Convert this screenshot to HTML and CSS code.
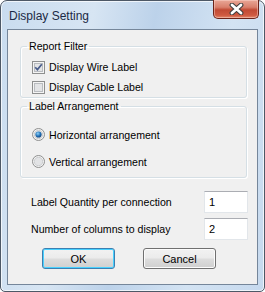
FILE: index.html
```html
<!DOCTYPE html>
<html lang="en">
<head>
    <meta charset="UTF-8">
    <title>Display Setting</title>
    <link rel="stylesheet" href="styles.css">
</head>
<body>
    <div class="window">
        <div class="titlebar">
            <span class="title">Display Setting</span>
            <button class="close-btn" type="button">
                <svg width="19" height="12" viewBox="0 0 19 12">
                    <path d="M5 2 L14 10 M14 2 L5 10" stroke="#3d3d3d" stroke-width="4.8" stroke-linecap="round"/>
                    <path d="M5 2 L14 10 M14 2 L5 10" stroke="#ffffff" stroke-width="2.8" stroke-linecap="round"/>
                </svg>
            </button>
        </div>
        <div class="client">
            <fieldset class="group filter">
                <legend>Report Filter</legend>
                <label class="check-row">
                    <svg class="box" width="13" height="13" viewBox="0 0 13 13">
                        <rect x="0.5" y="0.5" width="12" height="12" fill="#f4f4f4" stroke="#8e8f8f"/>
                        <rect x="2.5" y="2.5" width="8" height="8" fill="#e3e4e6" stroke="#b9bcc0"/>
                        <path d="M3.2 6.2 L5.4 8.6 L9.8 3.2" fill="none" stroke="#4b5e8c" stroke-width="1.7"/>
                    </svg>
                    Display Wire Label
                </label>
                <label class="check-row">
                    <svg class="box" width="13" height="13" viewBox="0 0 13 13">
                        <rect x="0.5" y="0.5" width="12" height="12" fill="#f4f4f4" stroke="#8e8f8f"/>
                        <rect x="2.5" y="2.5" width="8" height="8" fill="#e3e4e6" stroke="#b9bcc0"/>
                    </svg>
                    Display Cable Label
                </label>
            </fieldset>
            <fieldset class="group arrange">
                <legend>Label Arrangement</legend>
                <label class="radio-row">
                    <svg class="dot" width="13" height="13" viewBox="0 0 13 13">
                        <defs>
                            <radialGradient id="sel" cx="0.4" cy="0.35" r="0.7">
                                <stop offset="0" stop-color="#8fd1f8"/>
                                <stop offset="0.6" stop-color="#1f6fb5"/>
                                <stop offset="1" stop-color="#123f78"/>
                            </radialGradient>
                        </defs>
                        <circle cx="6.5" cy="6.5" r="6" fill="#f2f2f2" stroke="#8e8f8f"/>
                        <circle cx="6.5" cy="6.5" r="4.2" fill="#e2e3e5" stroke="#c4c6c9" stroke-width="0.8"/>
                        <circle cx="6.5" cy="6.5" r="3.1" fill="url(#sel)"/>
                    </svg>
                    Horizontal arrangement
                </label>
                <label class="radio-row">
                    <svg class="dot" width="13" height="13" viewBox="0 0 13 13">
                        <circle cx="6.5" cy="6.5" r="6" fill="#f2f2f2" stroke="#8e8f8f"/>
                        <circle cx="6.5" cy="6.5" r="4.2" fill="#e2e3e5" stroke="#c4c6c9" stroke-width="0.8"/>
                    </svg>
                    Vertical arrangement
                </label>
            </fieldset>
            <div class="field-row first">
                <span>Label Quantity per connection</span>
                <div class="textbox">1</div>
            </div>
            <div class="field-row">
                <span>Number of columns to display</span>
                <div class="textbox">2</div>
            </div>
            <div class="buttons">
                <button class="btn default" type="button">OK</button>
                <button class="btn" type="button">Cancel</button>
            </div>
        </div>
    </div>
</body>
</html>
```

FILE: styles.css
```css
body {
    margin: 0;
    background-color: #ffffff;
    font-family: "Liberation Sans", Arial, sans-serif;
    font-size: 10.6px;
    color: #000000;
}

.window {
    width: 265px;
    height: 292px;
    box-sizing: border-box;
    border: 1px solid #4d5866;
    border-radius: 7px 7px 5px 5px;
    background: linear-gradient(100deg, #c9dcef 0%, #d7e5f3 30%, #bcd2ea 50%, #d3e3f3 75%, #c6d9ee 100%);
    box-shadow: inset 0 0 0 1px rgba(255, 255, 255, 0.7);
    padding: 0 6px 6px 6px;
    display: flex;
    flex-direction: column;
}

.titlebar {
    height: 28px;
    display: flex;
    align-items: flex-start;
    justify-content: space-between;
}

.title {
    margin: 8px 0 0 2px;
    font-size: 12px;
    color: #1b2a45;
}

.close-btn {
    width: 46px;
    height: 19px;
    margin: -1px -1px 0 0;
    padding: 0;
    border: 1px solid #6b2319;
    border-top: none;
    border-radius: 0 0 5px 5px;
    background: linear-gradient(#e9a797 0%, #d9806c 40%, #c14a34 55%, #cf5a41 85%, #e38b6e 100%);
    box-shadow: inset 0 0 0 1px rgba(255, 220, 210, 0.45);
    display: flex;
    align-items: center;
    justify-content: center;
}

.client {
    flex: 1;
    border: 1px solid #75869a;
    background-color: #f0f0f0;
    display: flex;
    flex-direction: column;
}

.group {
    margin: 0 10px 0 12px;
    padding: 0 0 0 11px;
    border: 1px solid #d5dfe5;
    border-radius: 3px;
    box-shadow: inset 1px 1px 0 #ffffff, 1px 1px 0 #ffffff;
    min-width: 0;
}

.group legend {
    padding: 0 2px;
    margin-left: -5px;
    line-height: 14px;
}

.filter {
    margin-top: 9px;
    padding-top: 4px;
}

.arrange {
    margin-top: 1px;
    padding-top: 8px;
    padding-bottom: 2px;
}

.check-row,
.radio-row {
    display: flex;
    align-items: center;
    gap: 4px;
}

.check-row {
    height: 20px;
}

.radio-row {
    height: 27px;
}

.field-row {
    display: flex;
    align-items: center;
    justify-content: space-between;
    margin: 5px 9px 0 23px;
}

.field-row.first {
    margin-top: 13px;
}

.textbox {
    width: 44px;
    height: 22px;
    box-sizing: border-box;
    border: 1px solid #e2e6ea;
    border-top-color: #abadb3;
    background-color: #ffffff;
    padding: 4px 0 0 4px;
    font-size: 11px;
}

.buttons {
    display: flex;
    gap: 28px;
    margin: 8px 0 0 34px;
}

.btn {
    width: 73px;
    height: 21px;
    padding: 0;
    border: 1px solid #707070;
    border-radius: 3px;
    background: linear-gradient(#f2f2f2 0%, #ebebeb 48%, #dddddd 52%, #cfcfcf 100%);
    box-shadow: inset 0 0 0 1px #fcfcfc;
    font-family: "Liberation Sans", Arial, sans-serif;
    font-size: 11px;
    color: #000000;
}

.btn.default {
    border-color: #3c7fb1;
    box-shadow: inset 0 0 0 1px #48d1ff;
}
```
